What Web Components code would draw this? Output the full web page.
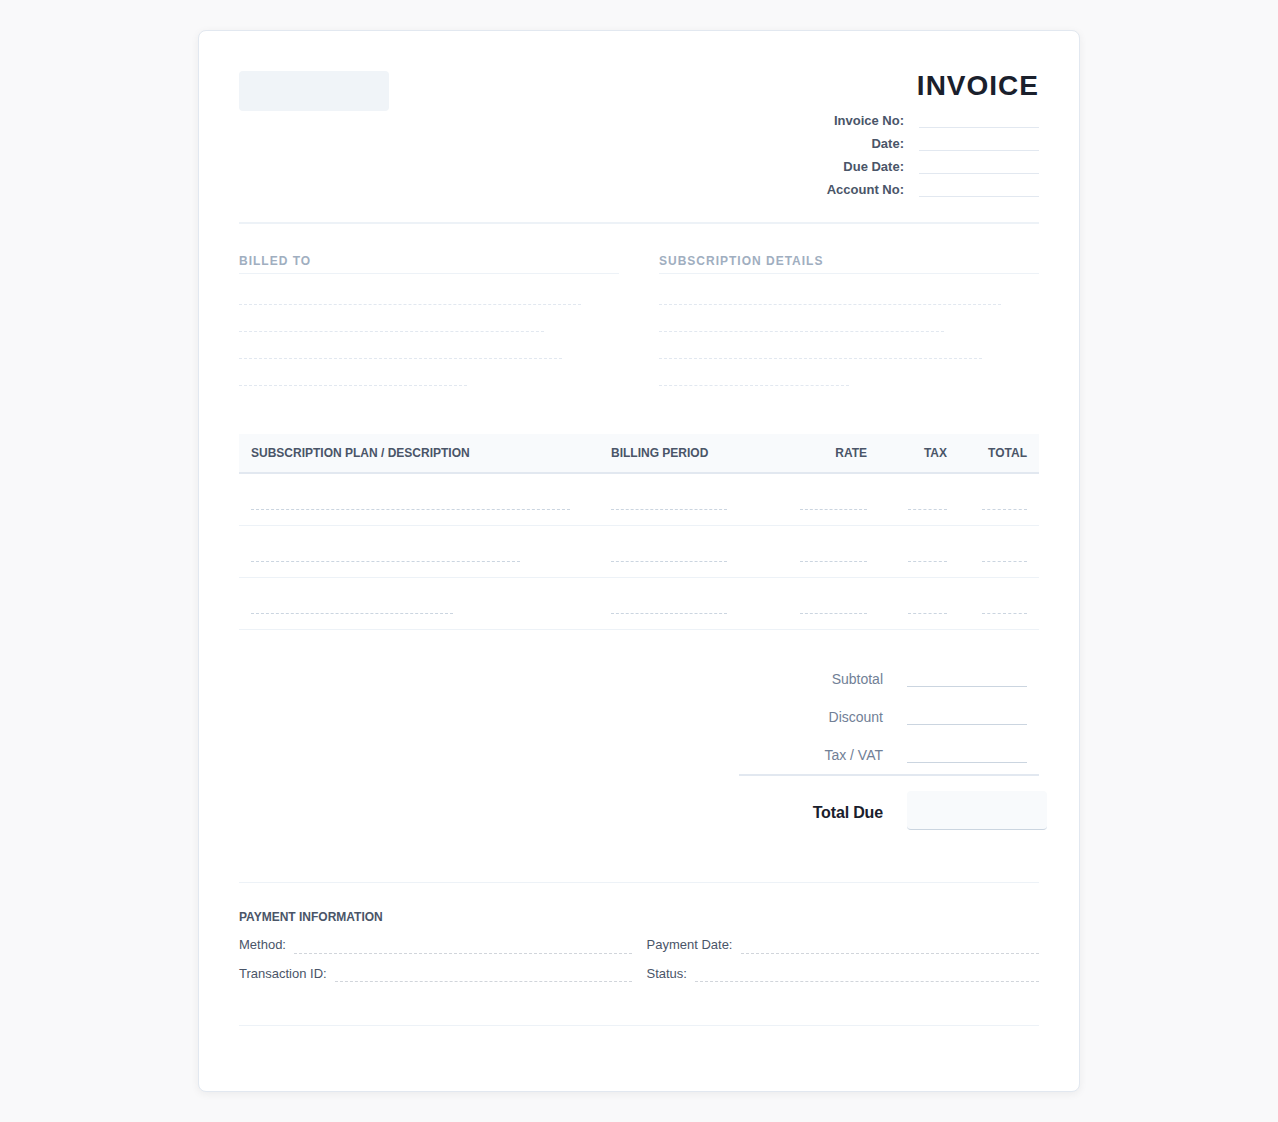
<!DOCTYPE html>
<html lang="en">
<head>
<meta charset="utf-8">
<title>Invoice</title>
<style>
    body {
        margin: 0;
        padding: 30px 0;
        background: #f9f9fa;
        font-family: "Liberation Sans", Arial, sans-serif;
    }
</style>
</head>
<body>

<template id="InvoiceCard">
    <style>
        :host {
            display: block;
            box-sizing: border-box;
            width: 882px;
            height: 1062px;
            margin: 0 auto;
            padding: 40px;
            background: #fff;
            border: 1px solid #e2e8f0;
            border-radius: 8px;
            box-shadow: 0 2px 8px rgba(0, 0, 0, 0.06);
        }
    </style>
    <slot></slot>
</template>

<template id="InvoiceHeader">
    <style>
        :host {
            display: flex;
            justify-content: space-between;
            align-items: flex-start;
            padding-bottom: 25px;
            border-bottom: 2px solid #edf2f7;
        }

        .logo {
            width: 150px;
            height: 40px;
            background: #f0f4f8;
            border-radius: 4px;
        }

        .side {
            display: flex;
            flex-direction: column;
            align-items: flex-end;
            gap: 5px;
        }

        h1 {
            margin: 0 0 2px;
            font-size: 28px;
            line-height: 30px;
            padding-bottom: 2px;
            font-weight: 700;
            letter-spacing: 1px;
            color: #1a202c;
        }
    </style>
    <div class="logo"></div>
    <div class="side">
        <h1>INVOICE</h1>
        <slot></slot>
    </div>
</template>

<template id="MetaRow">
    <style>
        :host {
            display: flex;
            align-items: flex-end;
            justify-content: flex-end;
            gap: 15px;
            height: 18px;
            font-size: 13px;
            line-height: 15px;
            font-weight: 700;
            color: #4a5568;
        }

        .line {
            width: 120px;
            height: 18px;
            box-sizing: border-box;
            border-bottom: 1px solid #e2e8f0;
        }
    </style>
    <span><slot></slot></span>
    <div class="line"></div>
</template>

<template id="PartyBlock">
    <style>
        :host {
            display: block;
        }

        h3 {
            margin: 0 0 12px;
            padding-bottom: 5px;
            font-size: 12px;
            line-height: 14px;
            font-weight: 700;
            letter-spacing: 1px;
            color: #a0aec0;
            border-bottom: 1px solid #edf2f7;
        }

        .line {
            box-sizing: content-box;
            height: 18px;
            margin-bottom: 8px;
            border-bottom: 1px dashed #e2e8f0;
        }
    </style>
    <h3><slot></slot></h3>
    <div id="lines"></div>
</template>

<template id="ItemsTable">
    <style>
        :host {
            display: block;
        }

        .head {
            display: grid;
            grid-template-columns: 360px 140px 140px 80px 80px;
            align-items: center;
            box-sizing: border-box;
            height: 40px;
            background: #f8fafc;
            border-bottom: 2px solid #e2e8f0;
            font-size: 12px;
            font-weight: 700;
            color: #4a5568;
        }

        .head span {
            padding: 0 12px;
        }

        .head .r {
            text-align: right;
        }
    </style>
    <div class="head">
        <span>SUBSCRIPTION PLAN / DESCRIPTION</span>
        <span>BILLING PERIOD</span>
        <span class="r">RATE</span>
        <span class="r">TAX</span>
        <span class="r">TOTAL</span>
    </div>
    <slot></slot>
</template>

<template id="ItemRow">
    <style>
        :host {
            display: grid;
            grid-template-columns: 360px 140px 140px 80px 80px;
            box-sizing: border-box;
            height: 52px;
            border-bottom: 1px solid #edf2f7;
        }

        .cell {
            display: flex;
            align-items: flex-end;
            padding: 0 12px 15px;
        }

        .cell.r {
            justify-content: flex-end;
        }

        .line {
            border-bottom: 1px dashed #cbd5e0;
        }
    </style>
    <div class="cell"><div class="line" id="desc"></div></div>
    <div class="cell"><div class="line" style="width:116px"></div></div>
    <div class="cell r"><div class="line" style="width:67px"></div></div>
    <div class="cell r"><div class="line" style="width:39px"></div></div>
    <div class="cell r"><div class="line" style="width:45px"></div></div>
</template>

<template id="TotalsBlock">
    <style>
        :host {
            display: block;
            width: 300px;
            margin: 30px 0 0 auto;
        }

        .rows {
            border-bottom: 2px solid #e2e8f0;
        }

        .due {
            display: flex;
            justify-content: flex-end;
            align-items: flex-end;
            gap: 24px;
            margin-top: 15px;
            margin-right: -8px;
        }

        .due span {
            width: 144px;
            padding-bottom: 8px;
            text-align: right;
            font-size: 16px;
            line-height: 18px;
            font-weight: 700;
            letter-spacing: -0.15px;
            color: #1a202c;
        }

        .box {
            box-sizing: border-box;
            width: 140px;
            height: 39px;
            background: #f8fafc;
            border-bottom: 1px solid #cbd5e0;
            border-radius: 4px;
        }
    </style>
    <div class="rows"><slot></slot></div>
    <div class="due"><span>Total Due</span><div class="box"></div></div>
</template>

<template id="TotalRow">
    <style>
        :host {
            display: flex;
            justify-content: flex-end;
            align-items: flex-end;
            gap: 24px;
            box-sizing: border-box;
            height: 38px;
            padding: 0 12px 11px 0;
            font-size: 14px;
            line-height: 16px;
            color: #718096;
        }

        .line {
            box-sizing: border-box;
            width: 120px;
            height: 16px;
            border-bottom: 1px solid #cbd5e0;
        }
    </style>
    <span><slot></slot></span>
    <div class="line"></div>
</template>

<template id="PaymentInfo">
    <style>
        :host {
            display: block;
            margin-top: 52px;
            padding-top: 27px;
            padding-bottom: 43px;
            border-top: 1px solid #edf2f7;
            border-bottom: 1px solid #edf2f7;
        }

        h4 {
            margin: 0 0 2px;
            font-size: 12px;
            line-height: 14px;
            font-weight: 700;
            color: #4a5568;
        }

        .grid {
            display: grid;
            grid-template-columns: 1fr 1fr;
            column-gap: 15px;
        }
    </style>
    <h4>PAYMENT INFORMATION</h4>
    <div class="grid"><slot></slot></div>
</template>

<template id="PaymentField">
    <style>
        :host {
            display: flex;
            align-items: flex-end;
            gap: 8px;
            height: 28px;
            font-size: 13px;
            line-height: 15px;
            color: #4a5568;
        }

        :host([second]) span {
            padding-bottom: 1px;
        }

        span {
            padding-bottom: 2px;
        }

        .line {
            flex: 1;
            border-bottom: 1px dashed #d1d5db;
        }
    </style>
    <span><slot></slot></span>
    <div class="line"></div>
</template>

<invoice-card>
    <invoice-header>
        <meta-row>Invoice No:</meta-row>
        <meta-row>Date:</meta-row>
        <meta-row>Due Date:</meta-row>
        <meta-row>Account No:</meta-row>
    </invoice-header>

    <party-grid>
        <party-block lines="342,305,323,228">BILLED TO</party-block>
        <party-block lines="342,285,323,190">SUBSCRIPTION DETAILS</party-block>
    </party-grid>

    <items-table>
        <item-row desc="319"></item-row>
        <item-row desc="269"></item-row>
        <item-row desc="202"></item-row>
    </items-table>

    <totals-block>
        <total-row>Subtotal</total-row>
        <total-row>Discount</total-row>
        <total-row>Tax / VAT</total-row>
    </totals-block>

    <payment-info>
        <payment-field>Method:</payment-field>
        <payment-field>Payment Date:</payment-field>
        <payment-field second>Transaction ID:</payment-field>
        <payment-field second>Status:</payment-field>
    </payment-info>
</invoice-card>

<script>

    // clones a template into an open shadow root
    class TemplateElement extends HTMLElement {
        constructor(templateId) {
            super();
            const template = document.querySelector('#' + templateId);
            this.attachShadow({ mode: 'open' });
            this.shadowRoot.appendChild(template.content.cloneNode(true));
        }
    }

    class InvoiceCard extends TemplateElement {
        constructor() { super('InvoiceCard'); }
    }

    class InvoiceHeader extends TemplateElement {
        constructor() { super('InvoiceHeader'); }
    }

    class MetaRow extends TemplateElement {
        constructor() { super('MetaRow'); }
    }

    class PartyGrid extends HTMLElement {
        constructor() {
            super();
            this.attachShadow({ mode: 'open' });
            this.shadowRoot.innerHTML = `
                <style>
                    :host {
                        display: grid;
                        grid-template-columns: 1fr 1fr;
                        column-gap: 40px;
                        margin: 30px 0 40px;
                    }
                </style>
                <slot></slot>`;
        }
    }

    class PartyBlock extends TemplateElement {
        constructor() { super('PartyBlock'); }

        connectedCallback() {
            const lines = this.shadowRoot.querySelector('#lines');
            lines.innerHTML = '';
            this.getAttribute('lines').split(',').forEach((width) => {
                const line = document.createElement('div');
                line.className = 'line';
                line.style.width = width + 'px';
                lines.appendChild(line);
            });
        }
    }

    class ItemsTable extends TemplateElement {
        constructor() { super('ItemsTable'); }
    }

    class ItemRow extends TemplateElement {
        constructor() { super('ItemRow'); }

        connectedCallback() {
            this.shadowRoot.querySelector('#desc').style.width = this.getAttribute('desc') + 'px';
        }
    }

    class TotalsBlock extends TemplateElement {
        constructor() { super('TotalsBlock'); }
    }

    class TotalRow extends TemplateElement {
        constructor() { super('TotalRow'); }
    }

    class PaymentInfo extends TemplateElement {
        constructor() { super('PaymentInfo'); }
    }

    class PaymentField extends TemplateElement {
        constructor() { super('PaymentField'); }
    }

    window.customElements.define('invoice-card', InvoiceCard);
    window.customElements.define('invoice-header', InvoiceHeader);
    window.customElements.define('meta-row', MetaRow);
    window.customElements.define('party-grid', PartyGrid);
    window.customElements.define('party-block', PartyBlock);
    window.customElements.define('items-table', ItemsTable);
    window.customElements.define('item-row', ItemRow);
    window.customElements.define('totals-block', TotalsBlock);
    window.customElements.define('total-row', TotalRow);
    window.customElements.define('payment-info', PaymentInfo);
    window.customElements.define('payment-field', PaymentField);

</script>

</body>
</html>
